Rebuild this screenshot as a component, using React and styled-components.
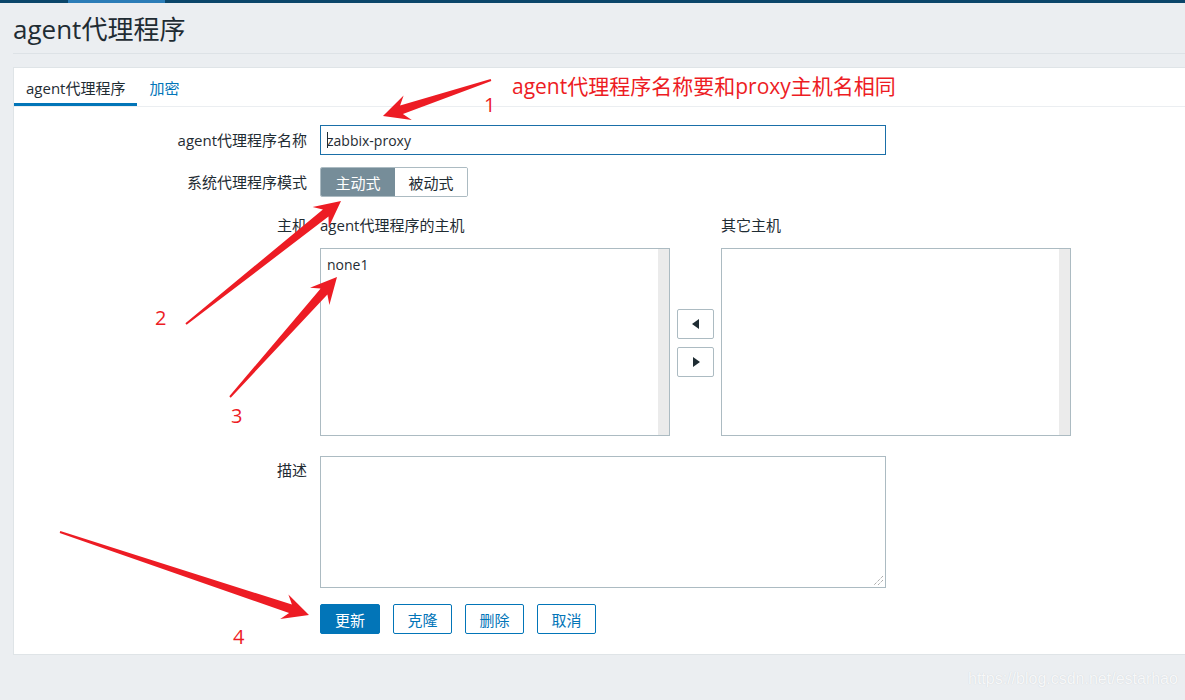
import React from "react";
import styled, { createGlobalStyle } from "styled-components";

const GlobalStyle = createGlobalStyle`
  html, body {
    margin: 0;
    padding: 0;
    background: #ebeef1;
  }
  body {
    font-family: "Open Sans", "Noto Sans CJK SC", sans-serif;
    color: #1f2c33;
  }
`;

const Page = styled.div`
  position: relative;
  width: 1185px;
  height: 700px;
  overflow: hidden;
  background: #ebeef1;
`;

const TopBar = styled.div`
  height: 3px;
  background: #0a466a;
  display: flex;
`;

const TopBarActive = styled.div`
  margin-left: 68px;
  width: 97px;
  background: #2b7db8;
`;

const Header = styled.div`
  margin: 0 0 0 13px;
  height: 50px;
  border-bottom: 1px solid #dde2e6;
  display: flex;
  align-items: center;
`;

const Title = styled.h1`
  margin: 0;
  font-size: 26px;
  font-weight: normal;
  color: #1f2c33;
`;

const Panel = styled.div`
  margin: 13px 0 0 13px;
  height: 588px;
  box-sizing: border-box;
  background: #fff;
  border: 1px solid #dfe4e7;
  border-right: none;
`;

const Tabs = styled.div`
  display: flex;
  height: 38px;
  border-bottom: 1px solid #ebeef1;
`;

const Tab = styled.div`
  display: flex;
  align-items: center;
  padding: 3px 12px 0 12px;
  font-size: 15px;
  color: ${(p) => (p.active ? "#1f2c33" : "#0275b8")};
  border-bottom: 3px solid ${(p) => (p.active ? "#0275b8" : "transparent")};
  box-sizing: border-box;
`;

const Form = styled.div`
  display: grid;
  grid-template-columns: 293px 1fr;
  column-gap: 13px;
  padding-top: 18px;
`;

const Label = styled.div`
  text-align: right;
  font-size: 15px;
  color: #1f2c33;
  line-height: ${(p) => p.lh || 30}px;
`;

const Cell = styled.div`
  margin-bottom: ${(p) => p.mb || 0}px;
`;

const TextInput = styled.div`
  width: 566px;
  height: 30px;
  box-sizing: border-box;
  border: 1px solid #1a6fa8;
  display: flex;
  align-items: center;
  padding-left: 6px;
  font-size: 14px;
  color: #1f2c33;
`;

const Caret = styled.span`
  display: inline-block;
  width: 1px;
  height: 16px;
  background: #1f2c33;
  margin-right: -1px;
`;

const Segmented = styled.div`
  display: inline-flex;
  height: 30px;
  box-sizing: border-box;
  border: 1px solid #acbbc2;
  border-radius: 2px;
  overflow: hidden;
`;

const Segment = styled.div`
  display: flex;
  align-items: center;
  justify-content: center;
  width: ${(p) => p.w}px;
  font-size: 15px;
  color: ${(p) => (p.on ? "#fff" : "#1f2c33")};
  background: ${(p) => (p.on ? "#768d99" : "#fff")};
`;

const HostsGrid = styled.div`
  display: grid;
  grid-template-columns: 350px 51px 350px;
`;

const ListHead = styled.div`
  font-size: 15px;
  line-height: 18px;
  height: 32px;
  color: #1f2c33;
`;

const ListBox = styled.div`
  position: relative;
  height: 188px;
  box-sizing: border-box;
  border: 1px solid #acbbc2;
  padding: 6px 6px;
  font-size: 14px;
  line-height: 20px;
  color: #1f2c33;
  &::after {
    content: "";
    position: absolute;
    top: 0;
    right: 0;
    bottom: 0;
    width: 11px;
    background: #ebebeb;
  }
`;

const MoveCol = styled.div`
  display: flex;
  flex-direction: column;
  padding-top: 61px;
  gap: 8px;
`;

const MoveBtn = styled.div`
  width: 37px;
  height: 30px;
  box-sizing: border-box;
  border: 1px solid #acbbc2;
  border-radius: 2px;
  background: #fff;
  display: flex;
  align-items: center;
  justify-content: center;
  margin-left: 7px;
`;

const TextArea = styled.div`
  position: relative;
  width: 566px;
  height: 132px;
  box-sizing: border-box;
  border: 1px solid #acbbc2;
`;

const Grip = styled.svg`
  position: absolute;
  right: 1px;
  bottom: 1px;
`;

const Buttons = styled.div`
  display: flex;
  gap: 13px;
`;

const Button = styled.div`
  height: 30px;
  width: ${(p) => p.w || 60}px;
  box-sizing: border-box;
  border: 1px solid #0275b8;
  border-radius: 2px;
  display: flex;
  align-items: center;
  justify-content: center;
  font-size: 15px;
  color: ${(p) => (p.primary ? "#fff" : "#0275b8")};
  background: ${(p) => (p.primary ? "#0275b8" : "#fff")};
`;

const Overlay = styled.svg`
  position: absolute;
  left: 0;
  top: 0;
  pointer-events: none;
`;

const Note = styled.div`
  position: absolute;
  left: ${(p) => p.x}px;
  top: ${(p) => p.y}px;
  color: #ed1c24;
  font-size: ${(p) => p.size || 20}px;
  line-height: 1;
  white-space: nowrap;
`;

const Watermark = styled.div`
  position: absolute;
  left: 968px;
  top: 670px;
  font-size: 16px;
  color: #f7f8f9;
  text-shadow: 0 0 1px #c9ced3;
  font-family: "Liberation Sans", Arial, sans-serif;
`;

// tapered red arrow polygon from tail to tip
function arrowPoints(tail, tip, headLen = 26, headW = 13, shaftW = 4.5) {
  const dx = tip[0] - tail[0];
  const dy = tip[1] - tail[1];
  const len = Math.hypot(dx, dy);
  const ux = dx / len;
  const uy = dy / len;
  const nx = -uy;
  const ny = ux;
  const bx = tip[0] - ux * headLen;
  const by = tip[1] - uy * headLen;
  const ix = tip[0] - ux * headLen * 0.75;
  const iy = tip[1] - uy * headLen * 0.75;
  const pts = [
    [tail[0] + nx * 1, tail[1] + ny * 1],
    [ix + nx * shaftW, iy + ny * shaftW],
    [bx + nx * headW, by + ny * headW],
    tip,
    [bx - nx * headW, by - ny * headW],
    [ix - nx * shaftW, iy - ny * shaftW],
    [tail[0] - nx * 1, tail[1] - ny * 1],
  ];
  return pts.map((p) => p.map((v) => v.toFixed(1)).join(",")).join(" ");
}

const arrows = [
  { tail: [491, 80], tip: [383, 116] },
  { tail: [186, 324], tip: [341, 201] },
  { tail: [230, 397], tip: [337, 277] },
  { tail: [60, 532], tip: [309, 615] },
];

export default function App() {
  return (
    <Page>
      <GlobalStyle />
      <TopBar>
        <TopBarActive />
      </TopBar>
      <Header>
        <Title>agent代理程序</Title>
      </Header>
      <Panel>
        <Tabs>
          <Tab active>agent代理程序</Tab>
          <Tab>加密</Tab>
        </Tabs>
        <Form>
          <Label>agent代理程序名称</Label>
          <Cell mb={12}>
            <TextInput>
              <Caret />
              zabbix-proxy
            </TextInput>
          </Cell>

          <Label>系统代理程序模式</Label>
          <Cell mb={19}>
            <Segmented>
              <Segment on w={74}>主动式</Segment>
              <Segment w={72}>被动式</Segment>
            </Segmented>
          </Cell>

          <Label lh={18}>主机</Label>
          <Cell mb={20}>
            <HostsGrid>
              <div>
                <ListHead>agent代理程序的主机</ListHead>
                <ListBox>none1</ListBox>
              </div>
              <div>
                <ListHead />
                <MoveCol>
                  <MoveBtn>
                    <svg width="8" height="10" viewBox="0 0 8 10">
                      <path d="M7 0 L7 10 L0 5 Z" fill="#1f2c33" />
                    </svg>
                  </MoveBtn>
                  <MoveBtn>
                    <svg width="8" height="10" viewBox="0 0 8 10">
                      <path d="M1 0 L1 10 L8 5 Z" fill="#1f2c33" />
                    </svg>
                  </MoveBtn>
                </MoveCol>
              </div>
              <div>
                <ListHead>其它主机</ListHead>
                <ListBox />
              </div>
            </HostsGrid>
          </Cell>

          <Label lh={28}>描述</Label>
          <Cell mb={16}>
            <TextArea>
              <Grip width="12" height="12" viewBox="0 0 12 12">
                <path d="M11 2 L2 11 M11 6 L6 11" stroke="#8a8a8a" strokeWidth="1" strokeDasharray="1 1" />
              </Grip>
            </TextArea>
          </Cell>

          <div />
          <Buttons>
            <Button primary w={60}>更新</Button>
            <Button w={59}>克隆</Button>
            <Button w={59}>删除</Button>
            <Button w={59}>取消</Button>
          </Buttons>
        </Form>
      </Panel>

      <Overlay width="1185" height="700" viewBox="0 0 1185 700">
        {arrows.map((a, i) => (
          <polygon key={i} points={arrowPoints(a.tail, a.tip)} fill="#ed1c24" />
        ))}
      </Overlay>
      <Note x={512} y={76} size={21}>agent代理程序名称要和proxy主机名相同</Note>
      <Note x={484} y={95}>1</Note>
      <Note x={155} y={308}>2</Note>
      <Note x={231} y={406}>3</Note>
      <Note x={233} y={627}>4</Note>
      <Watermark>https://blog.csdn.net/estarhao</Watermark>
    </Page>
  );
}
